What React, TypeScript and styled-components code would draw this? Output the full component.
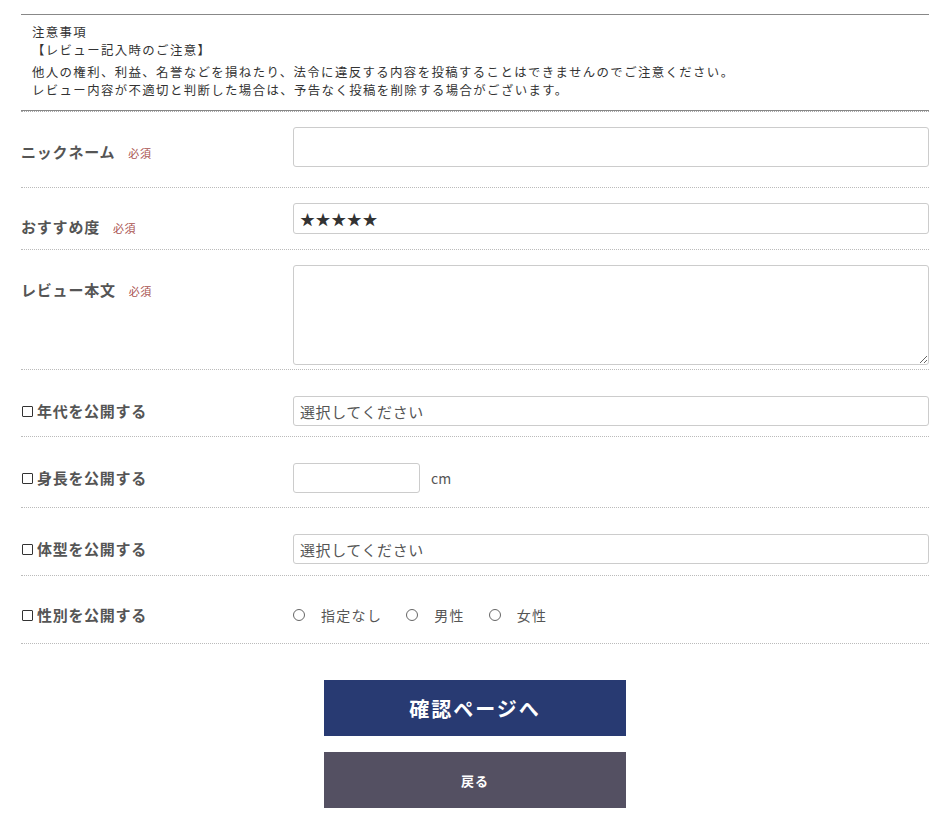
import React from "react";
import styled, { createGlobalStyle } from "styled-components";

const GlobalStyle = createGlobalStyle`
  html, body {
    margin: 0;
    padding: 0;
    background: #fff;
  }
  body {
    font-family: "Noto Sans CJK JP", "Noto Sans", sans-serif;
    color: #333;
  }
`;

const App: React.FunctionComponent = () => {
  return (
    <>
      <GlobalStyle />
      <Layout>
        <Notice>
          <NoticeLine>注意事項</NoticeLine>
          <NoticeLine>【レビュー記入時のご注意】</NoticeLine>
          <NoticeLine gap>
            他人の権利、利益、名誉などを損ねたり、法令に違反する内容を投稿することはできませんのでご注意ください。
          </NoticeLine>
          <NoticeLine>
            レビュー内容が不適切と判断した場合は、予告なく投稿を削除する場合がございます。
          </NoticeLine>
        </Notice>

        <Form>
          <Row top={15} bottom={20}>
            <Label offset={15}>
              ニックネーム<Required>必須</Required>
            </Label>
            <Field>
              <TextInput height={40} />
            </Field>
          </Row>

          <Row top={15} bottom={11}>
            <Label offset={14}>
              おすすめ度<Required>必須</Required>
            </Label>
            <Field>
              <StarBox>★★★★★</StarBox>
            </Field>
          </Row>

          <Row top={15} bottom={4}>
            <Label offset={15}>
              レビュー本文<Required>必須</Required>
            </Label>
            <Field>
              <TextArea />
            </Field>
          </Row>

          <Row top={26} bottom={10} center>
            <CheckLabel>
              <Check type="checkbox" />
              年代を公開する
            </CheckLabel>
            <Field>
              <Select defaultValue="">
                <option value="">選択してください</option>
              </Select>
            </Field>
          </Row>

          <Row top={26} bottom={14} center>
            <CheckLabel>
              <Check type="checkbox" />
              身長を公開する
            </CheckLabel>
            <Field>
              <TextInput height={30} narrow />
              <Unit>cm</Unit>
            </Field>
          </Row>

          <Row top={26} bottom={11} center>
            <CheckLabel>
              <Check type="checkbox" />
              体型を公開する
            </CheckLabel>
            <Field>
              <Select defaultValue="">
                <option value="">選択してください</option>
              </Select>
            </Field>
          </Row>

          <Row top={24} bottom={13} center>
            <CheckLabel>
              <Check type="checkbox" />
              性別を公開する
            </CheckLabel>
            <Field>
              <RadioGroup>
                {["指定なし", "男性", "女性"].map((g) => (
                  <RadioItem key={g}>
                    <Radio type="radio" name="gender" />
                    {g}
                  </RadioItem>
                ))}
              </RadioGroup>
            </Field>
          </Row>
        </Form>

        <Buttons>
          <Button kind="primary">確認ページへ</Button>
          <Button kind="back">戻る</Button>
        </Buttons>
      </Layout>
    </>
  );
};

export default App;

interface NoticeProps {
  gap?: boolean;
}

interface RowProps {
  top: number;
  bottom: number;
  center?: boolean;
}

interface LabelProps {
  offset: number;
}

interface InputProps {
  height: number;
  narrow?: boolean;
}

interface ButtonProps {
  kind: "primary" | "back";
}

const Layout = styled.div`
  width: 908px;
  margin: 0 0 0 21px;
  padding: 14px 0 8px;
`;

const Notice = styled.div`
  border-top: 1px solid #888;
  border-bottom: 1px solid #888;
  padding: 8px 11px 11px;
  font-size: 12.4px;
  line-height: 18px;
  letter-spacing: 1.4px;
  color: #333;
`;

const NoticeLine = styled.p<NoticeProps>`
  margin: ${(props) => (props.gap ? "4px 0 0" : "0")};
`;

const Form = styled.div`
  border-top: 1px dotted #aaa;
`;

const Row = styled.div<RowProps>`
  display: flex;
  align-items: ${(props) => (props.center ? "center" : "flex-start")};
  padding: ${(props) => `${props.top}px 0 ${props.bottom}px`};
  border-bottom: 1px dotted #bbb;
`;

const Label = styled.div<LabelProps>`
  width: 272px;
  flex-shrink: 0;
  margin-top: ${(props) => props.offset}px;
  font-size: 15px;
  font-weight: bold;
  line-height: 20px;
  letter-spacing: 0.8px;
  color: #555;
`;

const Required = styled.span`
  margin-left: 13px;
  font-size: 11px;
  font-weight: normal;
  letter-spacing: 0.05em;
  color: #a9524f;
`;

const CheckLabel = styled.label`
  width: 272px;
  flex-shrink: 0;
  display: flex;
  align-items: center;
  font-size: 15px;
  font-weight: bold;
  line-height: 20px;
  letter-spacing: 0.7px;
  color: #555;
`;

const Check = styled.input`
  appearance: none;
  width: 11px;
  height: 11px;
  margin: 0 4px 0 1px;
  border: 1px solid #333;
  border-radius: 1px;
  background: #fff;
`;

const Field = styled.div`
  flex: 1;
  display: flex;
  align-items: center;
  min-width: 0;
`;

const TextInput = styled.input<InputProps>`
  box-sizing: border-box;
  width: ${(props) => (props.narrow ? "127px" : "100%")};
  height: ${(props) => props.height}px;
  border: 1px solid #ccc;
  border-radius: 3px;
  padding: 0 6px;
  font-family: inherit;
  font-size: 14px;
  color: #555;
  outline: none;
`;

const StarBox = styled.div`
  box-sizing: border-box;
  width: 100%;
  height: 31px;
  border: 1px solid #ccc;
  border-radius: 3px;
  padding: 0 6px;
  display: flex;
  align-items: center;
  font-size: 15px;
  letter-spacing: 0.6px;
  color: #333;
`;

const TextArea = styled.textarea`
  box-sizing: border-box;
  width: 100%;
  height: 100px;
  border: 1px solid #ccc;
  border-radius: 3px;
  padding: 6px;
  font-family: inherit;
  font-size: 14px;
  color: #555;
  outline: none;
`;

const Select = styled.select`
  appearance: none;
  box-sizing: border-box;
  width: 100%;
  height: 30px;
  border: 1px solid #ccc;
  border-radius: 3px;
  padding: 0 6px;
  background: #fff;
  font-family: inherit;
  font-size: 15px;
  letter-spacing: 0.6px;
  color: #555;
  outline: none;
`;

const Unit = styled.span`
  margin-left: 11px;
  font-size: 14px;
  color: #555;
`;

const RadioGroup = styled.div`
  display: flex;
  align-items: center;
  height: 30px;
  gap: 24px;
`;

const RadioItem = styled.label`
  display: flex;
  align-items: center;
  font-size: 14px;
  letter-spacing: 1.3px;
  color: #555;
`;

const Radio = styled.input`
  appearance: none;
  width: 12px;
  height: 12px;
  margin: 0 16px 0 0;
  border: 1px solid #666;
  border-radius: 50%;
  background: #fff;
`;

const Buttons = styled.div`
  display: flex;
  flex-direction: column;
  align-items: center;
  gap: 16px;
  margin-top: 36px;
`;

const Button = styled.button<ButtonProps>`
  width: 302px;
  height: 56px;
  border: none;
  background: ${(props) => (props.kind === "primary" ? "#283a72" : "#545062")};
  color: #fff;
  font-family: inherit;
  font-weight: bold;
  font-size: ${(props) => (props.kind === "primary" ? "20px" : "13px")};
  letter-spacing: ${(props) => (props.kind === "primary" ? "2px" : "1px")};
  cursor: pointer;
`;
